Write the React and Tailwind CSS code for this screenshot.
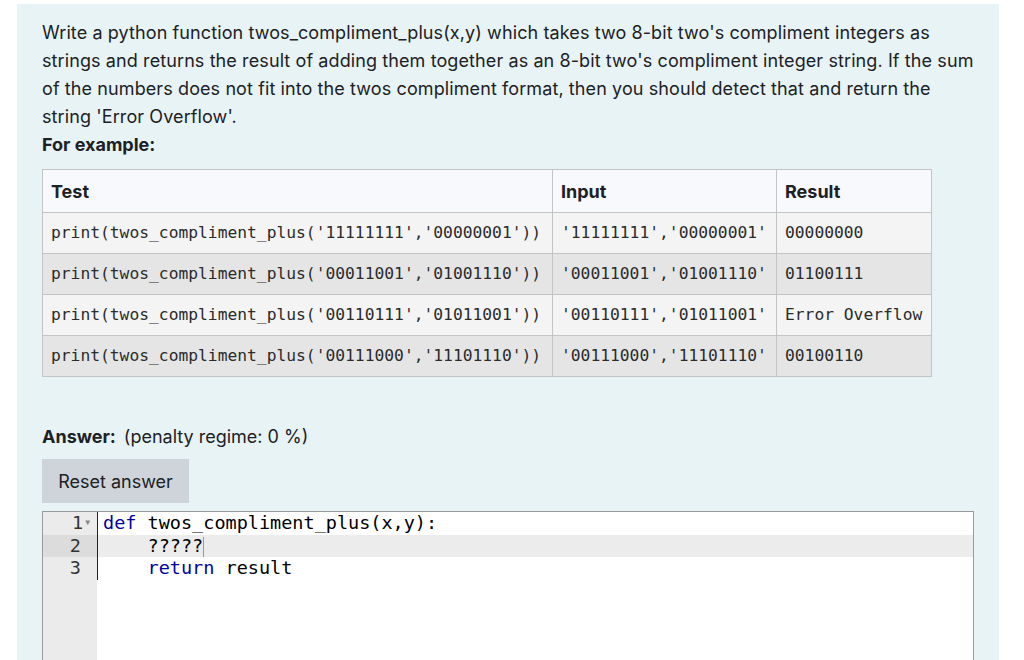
import React from 'react';

const rows = [
  ["print(twos_compliment_plus('11111111','00000001'))", "'11111111','00000001'", '00000000'],
  ["print(twos_compliment_plus('00011001','01001110'))", "'00011001','01001110'", '01100111'],
  ["print(twos_compliment_plus('00110111','01011001'))", "'00110111','01011001'", 'Error Overflow'],
  ["print(twos_compliment_plus('00111000','11101110'))", "'00111000','11101110'", '00100110'],
];

const sans = "font-['Inter','Liberation_Sans',sans-serif]";
const mono = "font-['DejaVu_Sans_Mono',monospace]";

export default function App() {
  return (
    <div className={`h-[660px] overflow-hidden bg-white pt-1 px-[17px] ${sans} text-[#1d2125]`}>
      <div className="h-[700px] w-[982px] bg-[#e7f3f5] pl-[25px] pr-[25px] pt-[15px]">
        {/* question text */}
        <p className="text-[18px] leading-[28px] tracking-[0.1px]">
          Write a python function twos_compliment_plus(x,y) which takes two 8-bit two's compliment integers as strings and returns the result of adding them together as an 8-bit two's compliment integer string. If the sum of the numbers does not fit into the twos compliment format, then you should detect that and return the string 'Error Overflow'.
        </p>
        <p className="text-[18px] leading-[28px] font-bold">For example:</p>

        <table className="mt-[10px] border-collapse border border-[#c4c4c4] text-left">
          <thead>
            <tr className="bg-[#f8f9fc]">
              <th className="w-[510px] border border-[#c4c4c4] px-2 h-[43px] text-[18px] font-bold">Test</th>
              <th className="w-[224px] border border-[#c4c4c4] px-2 h-[43px] text-[18px] font-bold">Input</th>
              <th className="w-[155px] border border-[#c4c4c4] px-2 h-[43px] text-[18px] font-bold">Result</th>
            </tr>
          </thead>
          <tbody>
            {rows.map((r, i) => (
              <tr key={i} className={i % 2 === 0 ? 'bg-[#f4f4f4]' : 'bg-[#e5e5e5]'}>
                {r.map((c, j) => (
                  <td
                    key={j}
                    className={`border border-[#c4c4c4] px-2 h-[41px] whitespace-nowrap ${mono} text-[16.3px] text-[#2b2b2b]`}
                  >
                    {c}
                  </td>
                ))}
              </tr>
            ))}
          </tbody>
        </table>

        {/* answer area */}
        <div className="mt-[46px] text-[18px] leading-[28px]">
          <span className="font-bold">Answer:</span>
          <span className="ml-2">(penalty regime: 0 %)</span>
        </div>

        <button className="mt-2 h-[44px] w-[147px] bg-[#ced4da] text-[18px] text-[#1d2125]">
          Reset answer
        </button>

        <div className="mt-2 flex h-[200px] w-[932px] border border-[#9a9a9a] bg-white">
          {/* gutter */}
          <div className={`w-[54px] shrink-0 bg-[#ebebeb] ${mono} text-[18.5px] leading-[22.6px] text-[#333]`}>
            <div className="flex items-center justify-end pr-[7px]">
              <span>1</span>
              <span className="ml-[2px] text-[8px] leading-none text-[#888]">▼</span>
            </div>
            <div className="bg-[#dcdcdc] pr-[16px] text-right">2</div>
            <div className="pr-[16px] text-right">3</div>
          </div>
          {/* code */}
          <div className={`flex-1 ${mono} text-[18.5px] leading-[22.6px] text-black`}>
            <div className="border-l border-[#222] pl-[5px] whitespace-pre">
              <div><span className="text-[#0000a2]">def</span> twos_compliment_plus(x,y):</div>
            </div>
            <div className="border-l border-[#222] bg-[#ececec] pl-[5px] whitespace-pre">
              <div>
                {'    ?????'}
                <span className="inline-block h-[20px] w-px bg-[#999] align-middle"></span>
              </div>
            </div>
            <div className="border-l border-[#222] pl-[5px] whitespace-pre">
              <div>{'    '}<span className="text-[#0000a2]">return</span> result</div>
            </div>
          </div>
        </div>
      </div>
    </div>
  );
}
